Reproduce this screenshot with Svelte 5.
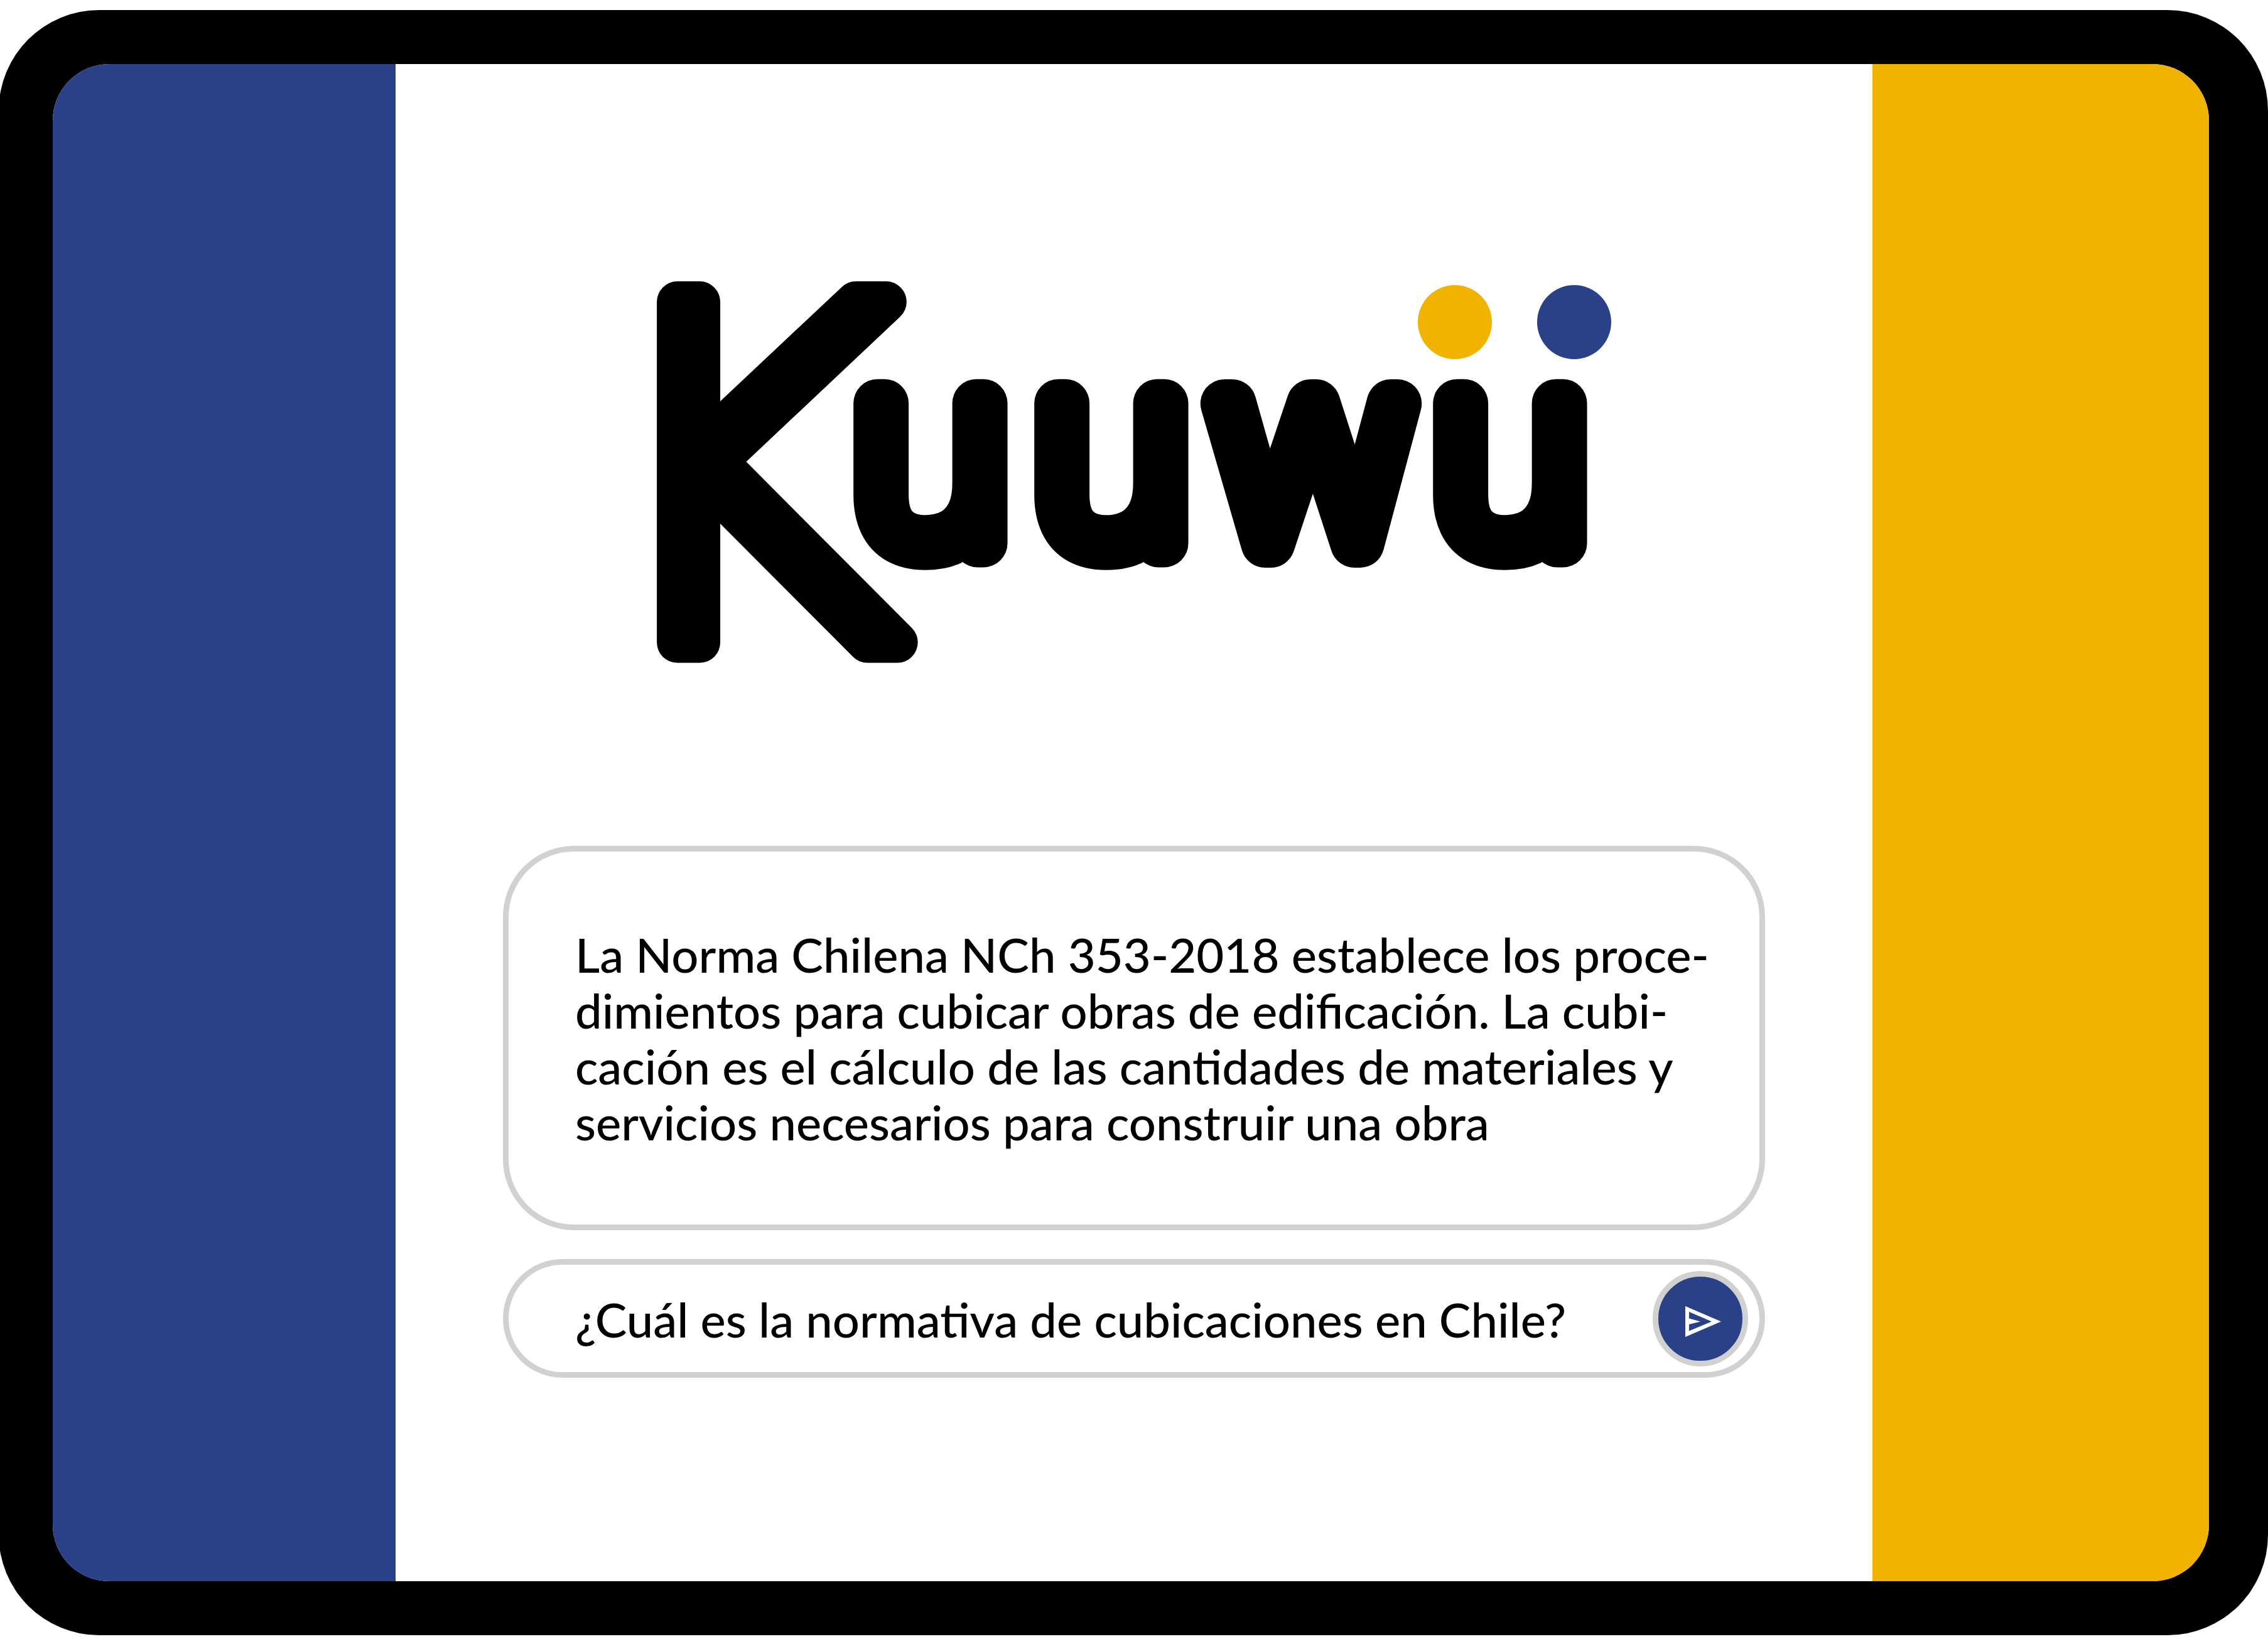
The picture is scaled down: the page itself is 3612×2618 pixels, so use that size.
<script>
  let question = '¿Cuál es la normativa de cubicaciones en Chile?';
</script>

<div class="frame">
  <div class="screen">
    <div class="side blue"></div>
    <main>
      <svg class="logo" viewBox="1036 440 1540 630" role="img" aria-label="Kuuwü">
        <g class="word">
          <text class="big" x="950" y="1023">K</text>
          <text class="small" x="1484" y="865">u</text>
          <text class="small" x="1772" y="865">u</text>
          <text class="small" x="2088" y="865">w</text>
          <text class="small" x="2407" y="865">u</text>
        </g>
        <circle class="dot-yellow" cx="2317" cy="513" r="59" />
        <circle class="dot-blue" cx="2507" cy="513" r="59" />
      </svg>
      <p class="answer">La Norma Chilena NCh 353-2018 establece los proce&shy;dimientos para cubicar obras de edificación. La cubi&shy;cación es el cálculo de las cantidades de materiales y servicios necesarios para construir una obra</p>
      <form class="ask" onsubmit={(e) => e.preventDefault()}>
        <input type="text" aria-label="Pregunta" bind:value={question} />
        <button type="submit" aria-label="Enviar">
          <svg viewBox="0 0 57 49" aria-hidden="true">
            <path fill-rule="evenodd" d="M0 0 57 24.500 0 49ZM6 9V19.500L24 24.500 6 29V39.500L42 24.500Z" />
          </svg>
        </button>
      </form>
    </main>
    <div class="side yellow"></div>
  </div>
</div>

<style>
  :global(body) { background: #fff; overflow-x: hidden; }
  .frame {
    box-sizing: border-box;
    display: flex;
    min-height: calc(100vh - 30px);
    margin: 16px 0 14px -2px;
    padding: 86px 94px 86px 86px;
    border-radius: 160px;
    background: #000;
  }
  .screen {
    flex: 1;
    display: grid;
    grid-template-columns: 546fr 2352fr 536fr;
    border-radius: 90px;
    overflow: hidden;
    background: #fff;
  }
  .blue { background: #2a4187; }
  .yellow { background: #f0b400; }
  main {
    display: flex;
    flex-direction: column;
    padding: 338px 171px 0;
    font-family: Lato, sans-serif;
    font-weight: 500;
    color: #000;
  }
  .logo { display: block; width: 100%; max-width: 1540px; align-self: center; overflow: visible; }
  .word { stroke: #000; stroke-linejoin: round; }
  .big {
    font-family: 'DejaVu Sans', sans-serif;
    font-weight: 200;
    font-size: 744px;
    stroke-width: 65px;
  }
  .small {
    font-family: 'Noto Sans', sans-serif;
    font-weight: 100;
    font-size: 422px;
    stroke-width: 77px;
    text-anchor: middle;
  }
  .dot-yellow { fill: #f0b400; }
  .dot-blue { fill: #2a4187; }
  .answer {
    margin: 277px 0 46px;
    padding: 119px 50px 119px 106px;
    border: 9px solid #d1d1d1;
    border-radius: 113px;
    font-size: 76px;
    line-height: 89px;
    hyphens: manual;
  }
  .ask {
    display: flex;
    align-items: center;
    padding: 10px 18px 9px 106px;
    border: 9px solid #d1d1d1;
    border-radius: 95px;
  }
  input {
    flex: 1;
    min-width: 0;
    padding: 0;
    border: 0;
    outline: 0;
    background: transparent;
    font: inherit;
    font-size: 76px;
    color: inherit;
  }
  button {
    display: flex;
    align-items: center;
    justify-content: center;
    width: 152px;
    height: 152px;
    padding: 8px 0 0 9px;
    box-sizing: border-box;
    border: 9px solid #d1d1d1;
    border-radius: 50%;
    background: #2a4187;
  }
  button svg { width: 57px; height: 49px; fill: #fff; }
</style>
